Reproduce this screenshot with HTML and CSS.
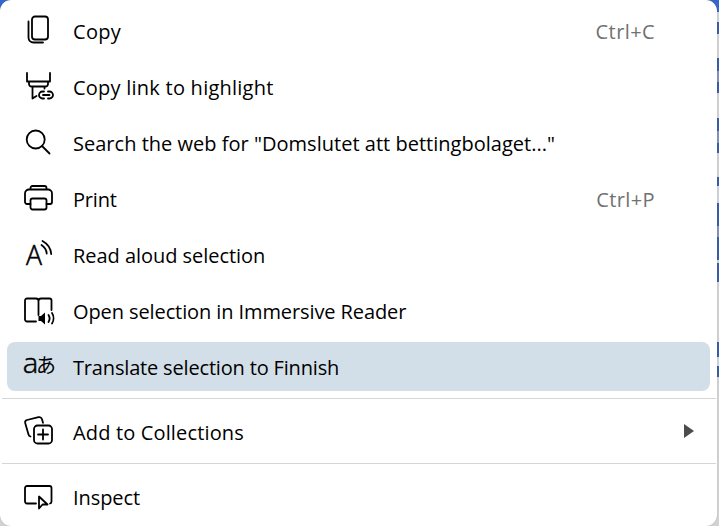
FILE: index.html
```html
<!DOCTYPE html>
<html lang="en">
<head>
<meta charset="UTF-8">
<title>Context menu</title>
<link rel="stylesheet" href="styles.css">
</head>
<body>
<div class="menu">
  <div class="item">
    <svg class="icon" viewBox="0 0 32 32"><rect x="10" y="1.500" width="16" height="23" rx="3"/><path d="M6.500 6.500v16a5 5 0 0 0 5 5H21"/></svg>
    <span class="label copy">Copy</span>
    <span class="shortcut">Ctrl+C</span>
  </div>
  <div class="item">
    <svg class="icon" viewBox="0 0 32 32"><path d="M5 2v8.500h23V2M7 10.500v2.500a2.500 2.500 0 0 0 2.500 2.500h14a2.500 2.500 0 0 0 2.500-2.500v-2.500M10.500 15.500v12l4-2.500M22.500 15.500v2M22 20.500h-1.500a3.500 3.500 0 0 0 0 7H22M26 20.500h1.500a3.500 3.500 0 0 1 0 7H26M21 24h6.500"/></svg>
    <span class="label link">Copy link to highlight</span>
  </div>
  <div class="item">
    <svg class="icon" viewBox="0 0 32 32"><circle cx="13.700" cy="12.500" r="9"/><path d="M20 19l7.500 7.500"/></svg>
    <span class="label search">Search the web for "Domslutet att bettingbolaget..."</span>
  </div>
  <div class="item">
    <svg class="icon" viewBox="0 0 32 32"><path d="M8.500 6.500V5a2 2 0 0 1 2-2h12a2 2 0 0 1 2 2v1.500M8.500 21H5a2 2 0 0 1-2-2v-8.500a4 4 0 0 1 4-4h19a4 4 0 0 1 4 4V19a2 2 0 0 1-2 2h-3.500"/><rect x="8.500" y="15.500" width="16" height="11" rx="2"/></svg>
    <span class="label print">Print</span>
    <span class="shortcut">Ctrl+P</span>
  </div>
  <div class="item">
    <svg class="icon" viewBox="0 0 32 32"><text class="letter" x="4" y="25.500" textLength="16" lengthAdjust="spacingAndGlyphs">A</text><path d="M19.500 6c3 2 5 4.500 5.200 8.500M20.500 2c4.500 2.500 8.300 7 8.700 13"/></svg>
    <span class="label read">Read aloud selection</span>
  </div>
  <div class="item">
    <svg class="icon" viewBox="0 0 32 32"><path d="M14 26.500H5a2 2 0 0 1-2-2V5.500a2 2 0 0 1 2-2h9a2.500 2.500 0 0 1 2.500 2.500v14M16.500 6a2.500 2.500 0 0 1 2.500-2.500h8.500a2 2 0 0 1 2 2V15M26.500 20c1.300 2.200 1.300 5 0 7M30 18c2 3 2 7.500 0 10.500"/><path class="solid" d="M16.500 21h2.500l4-3.500v12l-4-3.500h-2.500z"/></svg>
    <span class="label reader">Open selection in Immersive Reader</span>
  </div>
  <div class="item active">
    <svg class="icon" viewBox="0 0 32 32"><text class="latin" x="0.800" y="22" textLength="15.500" lengthAdjust="spacingAndGlyphs">a</text><text class="kana" x="14" y="21.700">あ</text></svg>
    <span class="label translate">Translate selection to Finnish</span>
  </div>
  <div class="separator"></div>
  <div class="item">
    <svg class="icon" viewBox="0 0 32 32"><path d="M8.500 20.500a3 3 0 0 1-2-2L3.200 7a2.500 2.500 0 0 1 1.800-3L16.500 1.200a3 3 0 0 1 3.500 2l1 3.600"/><rect x="12" y="9.500" width="18" height="18" rx="3.500"/><path d="M21 13.500v10M16 18.500h10"/></svg>
    <span class="label collections">Add to Collections</span>
    <svg class="arrow" viewBox="0 0 10 14"><path d="M0 0l10 7-10 7z"/></svg>
  </div>
  <div class="separator"></div>
  <div class="item">
    <svg class="icon" viewBox="0 0 32 32"><path d="M14 22.500H5a2 2 0 0 1-2-2V7a2 2 0 0 1 2-2h22.500a2 2 0 0 1 2 2v13.500a2 2 0 0 1-1.500 2M17 15.500v12l3.500-4h5z"/></svg>
    <span class="label inspect">Inspect</span>
  </div>
</div>
</body>
</html>
```
FILE: styles.css
```css
body {
  margin: 0;
  height: 526px;
  overflow: hidden;
  font-family: "Open Sans", "Noto Sans CJK JP", sans-serif;
  font-size: 20px;
  color: #000;
  /* page showing behind the menu */
  background: linear-gradient(#3566cc 0 12px, #ccd3dc 12px 22px, #3a5ca8 22px 34px, #d2d2d2 34px 58px, #3a5ca8 58px 71px, #8292bb 71px 82px, #3a5ca8 82px 93px, #d2d2d2 93px 118px, #3a5ca8 118px 131px, #8292bb 131px 143px, #3a5ca8 143px 153px, #d2d2d2 153px 177px, #3a5ca8 177px 186px, #ccd3dc 186px 203px, #3a5ca8 203px 226px, #8292bb 226px 237px, #3a5ca8 237px 260px, #ccd3dc 260px 263px, #3a5ca8 263px 282px, #d2d2d2 282px 342px, #3a5ca8 342px 357px, #ccd3dc 357px 366px, #3a5ca8 366px 377px, #d2d2d2 377px);
}
.menu {
  display: flex;
  flex-direction: column;
  box-sizing: border-box;
  width: 717px;
  height: 526px;
  padding-top: 3px;
  background: #fff;
  border-radius: 11px;
  box-shadow: 0 0 1px rgba(0, 0, 0, 0.3);
}
.item {
  display: flex;
  flex: none;
  align-items: center;
  box-sizing: border-box;
  height: 56px;
  padding: 0 62px 0 22px;
}
.active {
  height: 49px;
  margin: 3px 7px 4px;
  padding-left: 15px;
  background: #d3dfe8;
  border-radius: 8px;
}
.icon {
  flex: none;
  width: 32px;
  height: 32px;
  margin-right: 19px;
  overflow: visible;
  fill: none;
  stroke: #000;
  stroke-width: 1.8;
  stroke-linecap: round;
  stroke-linejoin: round;
}
.icon text,
.icon .solid {
  fill: #000;
  stroke: none;
}
.icon .letter {
  font-size: 28px;
  font-weight: 300;
  stroke: #000;
  stroke-width: 0.6;
}
.icon .latin {
  font-size: 27px;
  font-weight: 300;
  stroke: #000;
  stroke-width: 0.5;
}
.kana {
  font-family: "Noto Sans CJK JP", sans-serif;
  font-size: 20px;
}
.label {
  padding-top: 2px;
  white-space: nowrap;
  line-height: 28px;
}
.copy {
  letter-spacing: 0.3px;
}
.link {
  letter-spacing: 0.24px;
}
.search {
  letter-spacing: 0.02px;
}
.print {
  letter-spacing: -0.2px;
}
.read {
  letter-spacing: -0.04px;
}
.reader {
  letter-spacing: -0.1px;
}
.translate {
  letter-spacing: -0.17px;
}
.collections {
  letter-spacing: 0.15px;
}
.inspect {
  letter-spacing: -0.08px;
}
.shortcut {
  margin-left: auto;
  letter-spacing: 0.4px;
  color: #717171;
}
.arrow {
  width: 10px;
  height: 14px;
  margin-left: auto;
  margin-right: -39px;
  padding-bottom: 2px;
  fill: #4c4c4c;
}
.separator {
  flex: none;
  height: 1px;
  margin: 3px 1px 5px 2px;
  background: #d5d5d5;
}
```
